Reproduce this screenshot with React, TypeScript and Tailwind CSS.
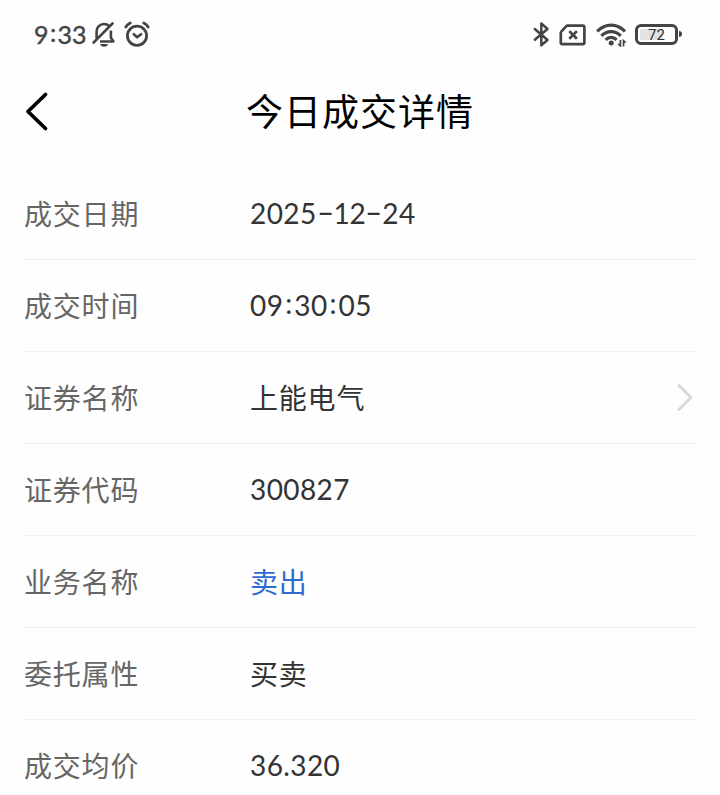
import clsx from 'clsx'

interface DetailItem {
  label: string
  value: string
  tone?: 'default' | 'sell'
  link?: boolean
}

const details: DetailItem[] = [
  { label: '成交日期', value: '2025-12-24' },
  { label: '成交时间', value: '09:30:05' },
  { label: '证券名称', value: '上能电气', link: true },
  { label: '证券代码', value: '300827' },
  { label: '业务名称', value: '卖出', tone: 'sell' },
  { label: '委托属性', value: '买卖' },
  { label: '成交均价', value: '36.320' },
]

function MutedBellIcon() {
  return (
    <svg width="24" height="26" viewBox="0 0 24 26" fill="none" stroke="#444" strokeWidth="2.6">
      <path d="M4.6 17.5V10.5C4.6 6.2 7.8 3 12 3c2 0 3.8.7 5.1 1.9" />
      <path d="M18.9 9.5v7.2l2.5 3.8H8" strokeLinejoin="round" />
      <path d="M20.5 2.5 1.6 21.5" strokeLinecap="round" />
      <path d="M8.2 23H16c-.3 1.7-1.8 2.8-3.9 2.8S8.5 24.7 8.2 23Z" fill="#444" stroke="none" />
    </svg>
  )
}

function AlarmIcon() {
  return (
    <svg width="26" height="26" viewBox="0 0 26 26" fill="none" stroke="#444" strokeLinecap="round">
      <circle cx="13" cy="14.7" r="9.6" strokeWidth="2.8" />
      <path d="m9.8 13.2 3.3 3 4-3" strokeWidth="2.6" strokeLinejoin="round" />
      <path d="M1.8 6C2.8 4.3 4.2 3 6.2 2M24.2 6C23.2 4.3 21.8 3 19.8 2" strokeWidth="2.8" />
    </svg>
  )
}

function BluetoothIcon() {
  return (
    <svg width="18" height="26" viewBox="0 0 18 26" fill="none" stroke="#444" strokeWidth="2.5" strokeLinejoin="round" strokeLinecap="round">
      <path d="M1.8 8 14.5 19l-6.2 5.2V2.4L14.5 8 1.8 18.8" />
    </svg>
  )
}

function NoSimIcon() {
  return (
    <svg width="28" height="22" viewBox="0 0 28 22" fill="none" stroke="#444" strokeWidth="2.7">
      <path d="M8.8 1.6h15a1.6 1.6 0 0 1 1.6 1.6v15.4a1.6 1.6 0 0 1-1.6 1.6H3.4a1.6 1.6 0 0 1-1.6-1.6V9.2c0-.8.2-1.3.7-1.8l4.6-5c.5-.6 1-.8 1.7-.8Z" />
      <path d="m10.3 7.1 7.6 7.6m0-7.6-7.6 7.6" />
    </svg>
  )
}

function WifiIcon() {
  return (
    <svg width="31" height="24" viewBox="0 0 31 24" fill="none" stroke="#444" strokeWidth="3.2">
      <path d="M1.2 8.4C9.3.1 20.9.1 29 8.4" />
      <path d="M5.4 12.8c5.6-5.6 13.8-5.6 19.4 0" />
      <path d="M9.6 16.8c3.2-3.2 7.8-3.2 11 0" />
      <circle cx="15.2" cy="20" r="2.5" fill="#444" stroke="none" />
      <path d="M24.4 17v5.9l-2.1-2M27.5 23.6v-5.9l2.1 2" strokeWidth="1.7" />
    </svg>
  )
}

function Battery() {
  return (
    <div className="flex items-center">
      <div className="flex h-[21px] w-[43px] rounded-[6px] border-3 border-[#444] p-[2px]">
        <div className="flex h-full w-full items-center justify-center rounded-[2px] bg-[linear-gradient(90deg,#e2e2e2_0_23px,transparent_23px)]">
          <span className="pt-0.5 font-['Roboto',sans-serif] text-[15px] leading-none text-[#303030]">72</span>
        </div>
      </div>
      <div className="ml-px h-[6px] w-[3px] rounded-r-sm bg-[#444]" />
    </div>
  )
}

function StatusBar() {
  return (
    <div className="flex h-[68px] items-center pl-[34px] pr-[38px]">
      <div className="flex w-[58px] pt-px font-['Lato',sans-serif] text-[25px] leading-none text-[#444] [-webkit-text-stroke:0.4px_#444]">
        <span>9</span>
        <span className="w-[9px] -translate-y-[2px] text-center">:</span>
        <span>33</span>
      </div>
      <MutedBellIcon />
      <div className="ml-2">
        <AlarmIcon />
      </div>
      <div className="ml-auto flex items-center">
        <BluetoothIcon />
        <div className="ml-2 pt-0.5">
          <NoSimIcon />
        </div>
        <div className="ml-[9px] mr-2 pt-0.5">
          <WifiIcon />
        </div>
        <Battery />
      </div>
    </div>
  )
}

function NavBar() {
  return (
    <div className="grid h-[88px] grid-cols-[1fr_auto_1fr] items-center">
      <svg className="ml-6" width="26" height="42" viewBox="0 0 26 42" fill="none" stroke="#000" strokeWidth="3.8" strokeLinecap="round" strokeLinejoin="round">
        <path d="M21.5 3.5 4 20.5l17.5 17" />
      </svg>
      <h1 className="pb-px text-[37px] leading-none tracking-[1px] text-black">今日成交详情</h1>
      <span />
    </div>
  )
}

// Separators are wider than in the digit font, so they get their own cells
function Value({ text }: { text: string }) {
  return (
    <>
      {text.split(/([-:])/).map((part, i) => {
        if (part === '-') {
          return (
            <span key={i} className="inline-block w-[17px] -translate-y-px scale-x-[1.7] text-center tracking-normal">
              -
            </span>
          )
        }
        if (part === ':') {
          return (
            <span key={i} className="inline-block w-[11px] -translate-y-[2px] text-center tracking-normal">
              :
            </span>
          )
        }
        return (
          <span key={i} className={clsx(part.startsWith('1') && 'tracking-[-0.4px]')}>
            {part}
          </span>
        )
      })}
    </>
  )
}

function DetailRow({ item }: { item: DetailItem }) {
  const numeric = /^\d/.test(item.value)
  return (
    <div className="flex h-[92px] items-center border-b border-[#efefef] pl-0.5">
      <div className="w-[226px] text-[28px] tracking-[0.8px] text-[#666]">{item.label}</div>
      <div
        className={clsx(
          'flex-1 text-[28px]',
          numeric ? 'pb-px tracking-[0.4px]' : 'tracking-[0.8px]',
          item.tone === 'sell' ? 'text-[#2e6bd0]' : 'text-[#333]',
        )}
      >
        <Value text={item.value} />
      </div>
      {item.link && (
        <svg className="mr-1" width="18" height="30" viewBox="0 0 18 30" fill="none" stroke="#d9d9d9" strokeWidth="3" strokeLinecap="round" strokeLinejoin="round">
          <path d="m3 2.5 12 12-12 12" />
        </svg>
      )}
    </div>
  )
}

export default function App() {
  return (
    <div className="h-[795px] overflow-hidden bg-[#fefefe] font-['Lato','Noto_Sans_CJK_SC',sans-serif]">
      <StatusBar />
      <NavBar />
      <main className="mt-3 px-[22px]">
        {details.map((item) => (
          <DetailRow key={item.label} item={item} />
        ))}
      </main>
    </div>
  )
}
